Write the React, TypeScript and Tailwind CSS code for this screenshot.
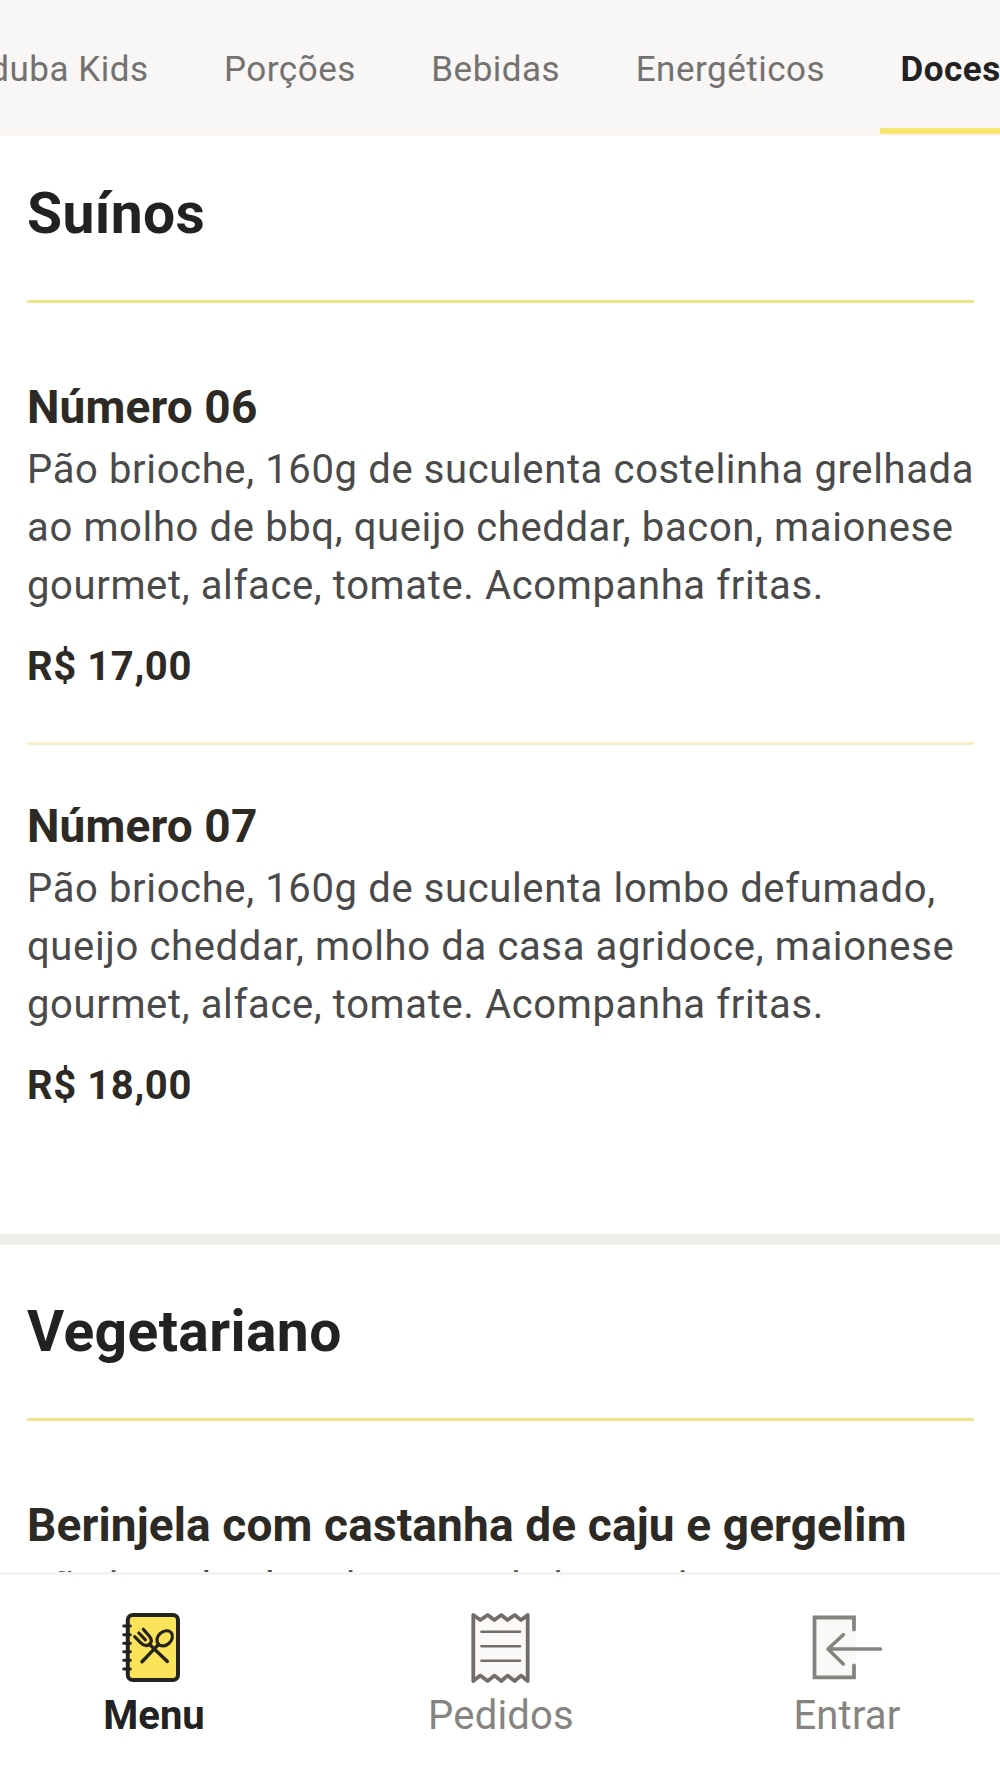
import type { ReactNode } from 'react';
import clsx from 'clsx';

interface MenuItem {
  name: string;
  description: string;
  price: string;
}

interface MenuSection {
  title: string;
  items: MenuItem[];
}

const CATEGORIES = ['Aduba Kids', 'Porções', 'Bebidas', 'Energéticos', 'Doces'];

const SECTIONS: MenuSection[] = [
  {
    title: 'Suínos',
    items: [
      {
        name: 'Número 06',
        description:
          'Pão brioche, 160g de suculenta costelinha grelhada ao molho de bbq, queijo cheddar, bacon, maionese gourmet, alface, tomate. Acompanha fritas.',
        price: 'R$ 17,00',
      },
      {
        name: 'Número 07',
        description:
          'Pão brioche, 160g de suculenta lombo defumado, queijo cheddar, molho da casa agridoce, maionese gourmet, alface, tomate. Acompanha fritas.',
        price: 'R$ 18,00',
      },
    ],
  },
  {
    title: 'Vegetariano',
    items: [
      {
        name: 'Berinjela com castanha de caju e gergelim',
        description: 'Pão brioche, hamburguer de berinjela',
        price: '',
      },
    ],
  },
];

function MenuIcon() {
  return (
    <svg width="64" height="76" viewBox="0 0 64 76" fill="none" stroke="#25231f" strokeLinecap="round" strokeLinejoin="round" className="-ml-1">
      <rect x="7.8" y="5" width="50.2" height="65" rx="5" fill="#fbe459" strokeWidth="4" />
      <path d="M3.7 16h6.6M3.7 24.7h6.6M3.7 33.3h6.6M3.7 41.7h6.6M3.7 50.3h6.6M3.7 59h6.6" strokeWidth="3" />
      <ellipse cx="44.7" cy="28.3" rx="8.6" ry="6.6" transform="rotate(-42 44.7 28.3)" strokeWidth="3.2" />
      <path d="M38.6 34.4 22 51.7M47.4 51.4 29.6 34.6" strokeWidth="3.4" />
      <path d="M14.7 26.7 20.5 32.6C23.5 35.6 26.6 36.4 29.3 34.4C32 32.2 31.8 29.2 29.4 26.2L23.3 19.2M18.9 23 25.4 29.8" strokeWidth="3.2" />
    </svg>
  );
}

function OrdersIcon() {
  return (
    <svg width="64" height="76" viewBox="0 0 64 76" fill="none" stroke="#706d6b" strokeLinecap="round" strokeLinejoin="round">
      <path
        d="M5.3 5 12.3 10 19.7 5 26.3 10 33.3 5 39.5 10 46.7 5 53 10 59.7 5V71L53 65.6 46.7 71 39.5 65.6 33.3 71 26.3 65.6 19.7 71 12.3 65.6 5.3 71Z"
        fill="#faf9f7"
        strokeWidth="3.8"
      />
      <path d="M13.5 21.7H52M13.5 36.3H52M13.5 50.7H52" strokeWidth="2.6" />
    </svg>
  );
}

function LoginIcon() {
  return (
    <svg width="76" height="76" viewBox="0 0 76 76" fill="none" stroke="#868481" strokeLinecap="round" strokeLinejoin="round">
      <path d="M6.5 7.4H48V67.3H6.5Z" fill="#faf9f7" stroke="none" />
      <path d="M46 19.5V7.5H6.5V67.3H46V55.5" strokeWidth="3.8" strokeLinejoin="miter" />
      <path d="M72.5 39H20M35.3 24.7 20 39 35.3 54" strokeWidth="3.6" />
    </svg>
  );
}

function CategoryTabs({ active }: { active: string }) {
  return (
    <nav className="flex h-[136px] shrink-0 justify-start border-b-[5px] border-[#fbf4ef] bg-[#f8f7f5]">
      <div className="-ml-[55px] flex h-[134px] shrink-0">
        {CATEGORIES.map((category) => (
          <button
            key={category}
            className={clsx(
              'mr-[33.5px] h-[134px] shrink-0 border-b-[6px] px-[21px] pt-[13px] text-[35px] tracking-[0.5px] whitespace-nowrap',
              category === active ? 'border-[#f6e473] font-bold text-[#222]' : 'border-transparent text-[#747270]',
            )}
          >
            {category}
          </button>
        ))}
      </div>
    </nav>
  );
}

function Item({ item }: { item: MenuItem }) {
  return (
    <li className="border-b-[3px] border-[#f8efc6] pb-[46px] last:border-transparent">
      <h3 className="text-[46px] leading-[60px] font-bold tracking-[0.13px] text-[#2d2a26]">{item.name}</h3>
      <p className="mt-1 -mr-2 text-[40px] leading-[58px] tracking-[0.63px] text-[#4a4a4a]">{item.description}</p>
      <p className="mt-[23px] text-[40px] leading-[58px] font-bold tracking-[0.6px] text-[#2d2a26]">{item.price}</p>
    </li>
  );
}

function Section({ section }: { section: MenuSection }) {
  return (
    <section className="border-b-[11px] border-[#f0eeea] pt-[50px] pr-[26px] pb-[70px] pl-[27px] first:pt-[41px]">
      <h2 className="h-[126px] border-b-[3px] border-[#efe58a] text-[57px] leading-[73px] font-bold tracking-[0.38px] text-[#222]">
        {section.title}
      </h2>
      <ul className="flex flex-col gap-[51px] pt-[74px]">
        {section.items.map((item) => (
          <Item key={item.name} item={item} />
        ))}
      </ul>
    </section>
  );
}

function NavButton({ label, icon, active }: { label: string; icon: ReactNode; active?: boolean }) {
  return (
    <button
      className={clsx(
        'flex w-[260px] flex-col items-center text-[40px] leading-[48px]',
        active ? 'font-bold text-[#222]' : 'tracking-[0.2px] text-[#868481]',
      )}
    >
      {icon}
      <span className={clsx('mt-[6px]', !active && 'pl-0.5')}>{label}</span>
    </button>
  );
}

export default function App() {
  return (
    <div className="flex h-[1778px] w-[1000px] flex-col overflow-hidden bg-white font-['Roboto',sans-serif]">
      <CategoryTabs active="Doces" />

      <main className="min-h-0 flex-1 overflow-hidden">
        {SECTIONS.map((section) => (
          <Section key={section.title} section={section} />
        ))}
      </main>

      <footer className="flex h-[206px] shrink-0 justify-between border-t-[3px] border-[#f3f3f3] bg-white px-6 pt-[35px]">
        <NavButton label="Menu" icon={<MenuIcon />} active />
        <NavButton label="Pedidos" icon={<OrdersIcon />} />
        <NavButton label="Entrar" icon={<LoginIcon />} />
      </footer>
    </div>
  );
}
